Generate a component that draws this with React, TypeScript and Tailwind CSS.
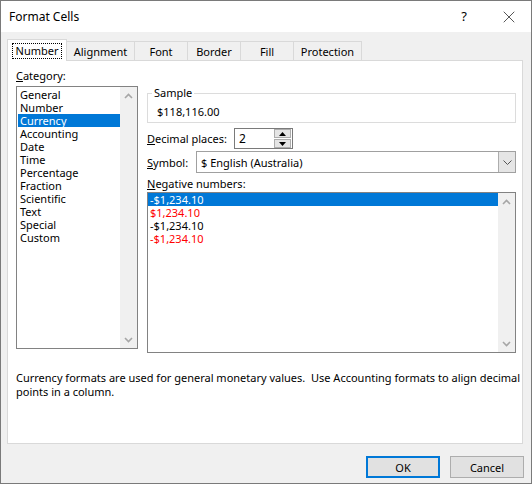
import { X } from 'lucide-react';

// Windows 10 "Format Cells" dialog, Number tab
const tabs = [
    { label: 'Number', w: 'w-[60px]' },
    { label: 'Alignment', w: 'w-[69px]' },
    { label: 'Font', w: 'w-[54px]' },
    { label: 'Border', w: 'w-[54px]' },
    { label: 'Fill', w: 'w-[54px]' },
    { label: 'Protection', w: 'w-[69px]' },
];

const categories = ['General', 'Number', 'Currency', 'Accounting', 'Date', 'Time', 'Percentage', 'Fraction', 'Scientific', 'Text', 'Special', 'Custom'];

const negatives = [
    { text: '-$1,234.10', red: false },
    { text: '$1,234.10', red: true },
    { text: '-$1,234.10', red: false },
    { text: '-$1,234.10', red: true },
];

function ScrollArrow({ up }: { up?: boolean }) {
    return (
        <svg width="9" height="6" viewBox="0 0 9 6" className="block">
            <path d={up ? 'M1 5 L4.5 1.5 L8 5' : 'M1 1 L4.5 4.5 L8 1'} fill="none" stroke="#a6a6a6" strokeWidth="1.6" />
        </svg>
    );
}

function ScrollBar() {
    return (
        <div className="flex w-[17px] shrink-0 flex-col justify-between bg-[#f0f0f0]">
            <div className="flex h-[17px] items-center justify-center"><ScrollArrow up /></div>
            <div className="flex h-[17px] items-center justify-center"><ScrollArrow /></div>
        </div>
    );
}

export default function App() {
    return (
        <div className="flex h-[484px] w-[532px] flex-col border border-[#7a7a7a] bg-[#f0f0f0] font-['Segoe_UI','Noto_Sans',sans-serif] text-[11px] text-black">
            {/* TITLE BAR */}
            <div className="flex h-[31px] shrink-0 items-center bg-white pl-[8px]">
                <span className="text-[12px] leading-[15px]">Format Cells</span>
                <span className="ml-auto mr-[32px] text-[13px] leading-[15px]">?</span>
                <X size={20} strokeWidth={0.8} className="mr-[12px]" />
            </div>

            {/* TABS + PANEL */}
            <div className="flex flex-col pl-[6px] pt-[7px]">
                <div className="flex h-[21px] items-end">
                    {tabs.map((t, i) => (
                        i === 0 ? (
                            <div key={t.label} className={`relative z-10 -mb-px flex h-[22px] ${t.w} items-center justify-center border border-b-0 border-[#d9d9d9] bg-white`}>
                                <span className="border border-dotted border-black px-[3px] leading-[14px]">{t.label}</span>
                            </div>
                        ) : (
                            <div key={t.label} className={`-ml-px flex h-[19px] ${t.w} items-center justify-center border border-b-0 border-[#d9d9d9] bg-[#f0f0f0] leading-[15px]`}>
                                {t.label}
                            </div>
                        )
                    ))}
                </div>

                <div className="flex h-[384px] w-[516px] flex-col border border-[#d9d9d9] bg-white pl-[8px] pt-[7px]">
                    <div className="flex gap-[9px]">
                        {/* CATEGORY */}
                        <div className="flex flex-col">
                            <div className="leading-[15px]"><span className="underline">C</span>ategory:</div>
                            <div className="mt-[3px] flex h-[263px] w-[122px] border border-[#828282]">
                                <div className="flex flex-1 flex-col pl-px pt-px">
                                    {categories.map(c => (
                                        <div key={c} className={`h-[13px] pl-[2px] leading-[13px] ${c === 'Currency' ? 'bg-[#0078d7] text-white' : ''}`}>{c}</div>
                                    ))}
                                </div>
                                <ScrollBar />
                            </div>
                        </div>

                        {/* RIGHT SIDE */}
                        <div className="flex w-[369px] flex-col pt-[18px]">
                            <div className="relative mt-[7px] h-[30px] border border-[#dcdcdc] pl-[9px] pt-[10px] leading-[15px]">
                                <span className="absolute -top-[8px] left-[4px] bg-white px-[2px] leading-[14px]">Sample</span>
                                $118,116.00
                            </div>

                            <div className="mt-[5px] flex h-[21px] items-center">
                                <div className="w-[87px] whitespace-nowrap leading-[15px]"><span className="underline">D</span>ecimal places:</div>
                                <div className="flex h-[21px] w-[59px] items-center border border-[#7a7a7a] bg-white">
                                    <span className="flex-1 pl-[4px] text-[12px] leading-[15px]">2</span>
                                    <div className="mr-px flex h-[19px] w-[17px] flex-col gap-px">
                                        <div className="flex flex-1 items-center justify-center border border-[#adadad] bg-[#e5e5e5]">
                                            <svg width="7" height="4" viewBox="0 0 7 4"><path d="M0 4 L3.5 0 L7 4 Z" fill="#000" /></svg>
                                        </div>
                                        <div className="flex flex-1 items-center justify-center border border-[#adadad] bg-[#e5e5e5]">
                                            <svg width="7" height="4" viewBox="0 0 7 4"><path d="M0 0 L3.5 4 L7 0 Z" fill="#000" /></svg>
                                        </div>
                                    </div>
                                </div>
                            </div>

                            <div className="mt-[2px] flex h-[22px] items-center">
                                <div className="w-[49px] leading-[15px]"><span className="underline">S</span>ymbol:</div>
                                <div className="flex h-[22px] w-[320px] items-center border border-[#a0a0a0] bg-white">
                                    <span className="flex-1 pl-[4px] leading-[15px]">$ English (Australia)</span>
                                    <div className="flex h-full w-[17px] items-center justify-center border-l border-[#adadad] bg-[#e5e5e5]">
                                        <svg width="9" height="5" viewBox="0 0 9 5"><path d="M0.5 0.5 L4.5 4.5 L8.5 0.5" fill="none" stroke="#555" strokeWidth="1" /></svg>
                                    </div>
                                </div>
                            </div>

                            <div className="mt-[3px] leading-[15px]"><span className="underline">N</span>egative numbers:</div>
                            <div className="mt-px flex h-[161px] w-[369px] border border-[#828282]">
                                <div className="flex flex-1 flex-col">
                                    {negatives.map((n, i) => (
                                        <div key={i} className={`h-[13px] pl-[2px] leading-[13px] ${i === 0 ? 'bg-[#0078d7] text-white' : n.red ? 'text-[#ff0000]' : ''}`}>{n.text}</div>
                                    ))}
                                </div>
                                <ScrollBar />
                            </div>
                        </div>
                    </div>

                    <p className="mt-[18px] whitespace-pre leading-[14px]">
                        {'Currency formats are used for general monetary values.  Use Accounting formats to align decimal\npoints in a column.'}
                    </p>
                </div>
            </div>

            {/* BUTTONS */}
            <div className="mt-[12px] flex justify-end gap-[10px] pr-[7px]">
                <button className="h-[22px] w-[74px] border-2 border-[#0078d7] bg-[#e1e1e1] leading-[15px]">OK</button>
                <button className="h-[22px] w-[74px] border border-[#adadad] bg-[#e1e1e1] leading-[15px]">Cancel</button>
            </div>
        </div>
    );
}
